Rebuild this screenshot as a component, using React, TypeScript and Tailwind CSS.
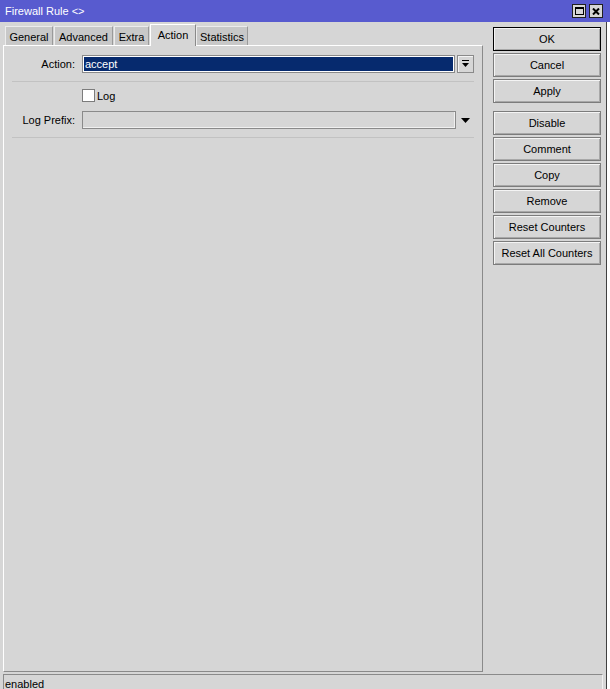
import React from "react"

const tabs = [
  { label: "General", w: "w-[48px]", ml: "ml-[2px]" },
  { label: "Advanced", w: "w-[59px]", ml: "ml-[1px]" },
  { label: "Extra", w: "w-[35px]", ml: "ml-[1px]" },
  { label: "Action", w: "w-[46px]", ml: "ml-[1px]", active: true },
  { label: "Statistics", w: "w-[52px]", ml: "ml-0" },
]

function WinButton({ label, primary, className = "" }: { label: string; primary?: boolean; className?: string }) {
  return (
    <div
      className={`h-[24px] w-[108px] flex items-center justify-center border ${
        primary ? "border-black" : "border-[#7c7c7c]"
      } bg-[#d6d6d6] shadow-[inset_1px_1px_0_#f4f4f4,inset_-1px_-1px_0_#a8a8a8] ${className}`}
    >
      {label}
    </div>
  )
}

export default function App() {
  return (
    <div className="w-[610px] h-[689px] flex flex-col bg-white text-[11px] leading-[13px] text-black font-['Liberation_Sans',Arial,sans-serif] overflow-hidden">
      {/* title bar */}
      <div className="h-[22px] shrink-0 bg-[#585bcf] flex items-center pl-[5px] pr-[7px]">
        <span className="text-white">Firewall Rule &lt;&gt;</span>
        <div className="ml-auto flex gap-[3px]">
          <div className="w-[14px] h-[14px] border border-[#202020] bg-[#d6d6d6] flex items-center justify-center">
            <div className="w-[9px] h-[8px] border border-black border-t-2" />
          </div>
          <div className="w-[14px] h-[14px] border border-[#202020] bg-[#d6d6d6] flex items-center justify-center">
            <svg width="8" height="7" viewBox="0 0 8 7">
              <path d="M1 0.5 L7 6.5 M7 0.5 L1 6.5" stroke="black" strokeWidth="2" />
            </svg>
          </div>
        </div>
      </div>

      <div className="flex flex-1 min-h-0">
        {/* window body */}
        <div className="w-[606px] flex flex-col bg-[#d6d6d6]">
          <div className="flex flex-1 min-h-0">
            {/* left: tabs + panel */}
            <div className="pl-[3px] pt-[2px] flex flex-col">
              <div className="h-[21px] flex items-end">
                {tabs.map((t) =>
                  t.active ? (
                    <div
                      key={t.label}
                      className={`${t.w} ${t.ml} h-[22px] -mb-[1px] relative z-10 bg-[#d6d6d6] border-t border-l border-white border-r border-r-[#8a8a8a] flex items-start justify-center pt-[4px]`}
                    >
                      {t.label}
                    </div>
                  ) : (
                    <div
                      key={t.label}
                      className={`${t.w} ${t.ml} h-[19px] bg-[#c8c8c8] border-t border-l border-[#ececec] border-r border-r-[#9a9a9a] flex items-start justify-center pt-[4px]`}
                    >
                      {t.label}
                    </div>
                  )
                )}
              </div>
              <div className="w-[480px] h-[627px] border-t border-l border-white border-r border-b border-r-[#8a8a8a] border-b-[#8a8a8a] pt-[9px] flex flex-col">
                {/* Action row */}
                <div className="flex items-center h-[18px]">
                  <div className="w-[71px] text-right">Action:</div>
                  <div className="ml-[7px] w-[373px] h-[18px] border border-[#8a8a8a] bg-[#062a6e] shadow-[inset_0_0_0_1px_#ffffff] text-white flex items-center pl-[2px]">
                    accept
                  </div>
                  <div className="ml-[2px] w-[17px] h-[18px] border border-[#8a8a8a] bg-[#d6d6d6] shadow-[inset_1px_1px_0_#f4f4f4] flex items-center justify-center">
                    <svg width="7" height="8" viewBox="0 0 7 8">
                      <rect x="0" y="0" width="7" height="1" fill="black" />
                      <path d="M0 3 H7 L3.5 7 Z" fill="black" />
                    </svg>
                  </div>
                </div>
                <div className="mt-[8px] ml-[8px] w-[462px] h-[1px] bg-[#c2c2c2]" />

                {/* Log checkbox */}
                <div className="mt-[7px] flex items-center h-[13px] pl-[78px]">
                  <div className="w-[13px] h-[13px] border border-[#7c7c7c] bg-white" />
                  <span className="ml-[2px] pt-[1px]">Log</span>
                </div>

                {/* Log Prefix row */}
                <div className="mt-[9px] flex items-center h-[18px]">
                  <div className="w-[71px] text-right">Log Prefix:</div>
                  <div className="ml-[7px] w-[374px] h-[18px] border border-[#8a8a8a] shadow-[inset_-1px_-1px_0_#f0f0f0] bg-[#d6d6d6]" />
                  <svg className="ml-[5px]" width="9" height="5" viewBox="0 0 9 5">
                    <path d="M0 0 H9 L4.5 5 Z" fill="black" />
                  </svg>
                </div>
                <div className="mt-[8px] ml-[8px] w-[462px] h-[1px] bg-[#c2c2c2]" />
              </div>
            </div>

            {/* right: buttons */}
            <div className="ml-[10px] pt-[5px] flex flex-col">
              <WinButton label="OK" primary />
              <WinButton label="Cancel" className="mt-[2px]" />
              <WinButton label="Apply" className="mt-[2px]" />
              <WinButton label="Disable" className="mt-[8px]" />
              <WinButton label="Comment" className="mt-[2px]" />
              <WinButton label="Copy" className="mt-[2px]" />
              <WinButton label="Remove" className="mt-[2px]" />
              <WinButton label="Reset Counters" className="mt-[2px]" />
              <WinButton label="Reset All Counters" className="mt-[2px]" />
            </div>
          </div>

          {/* status bar */}
          <div className="mt-[2px] ml-[3px] w-[600px] h-[15px] shrink-0 border-t border-l border-[#8a8a8a] border-r border-r-[#f0f0f0] flex items-start pt-[3px] pl-[1px]">
            enabled
          </div>
        </div>
        <div className="flex-1 border-l border-[#404040] bg-white" />
      </div>
    </div>
  )
}
